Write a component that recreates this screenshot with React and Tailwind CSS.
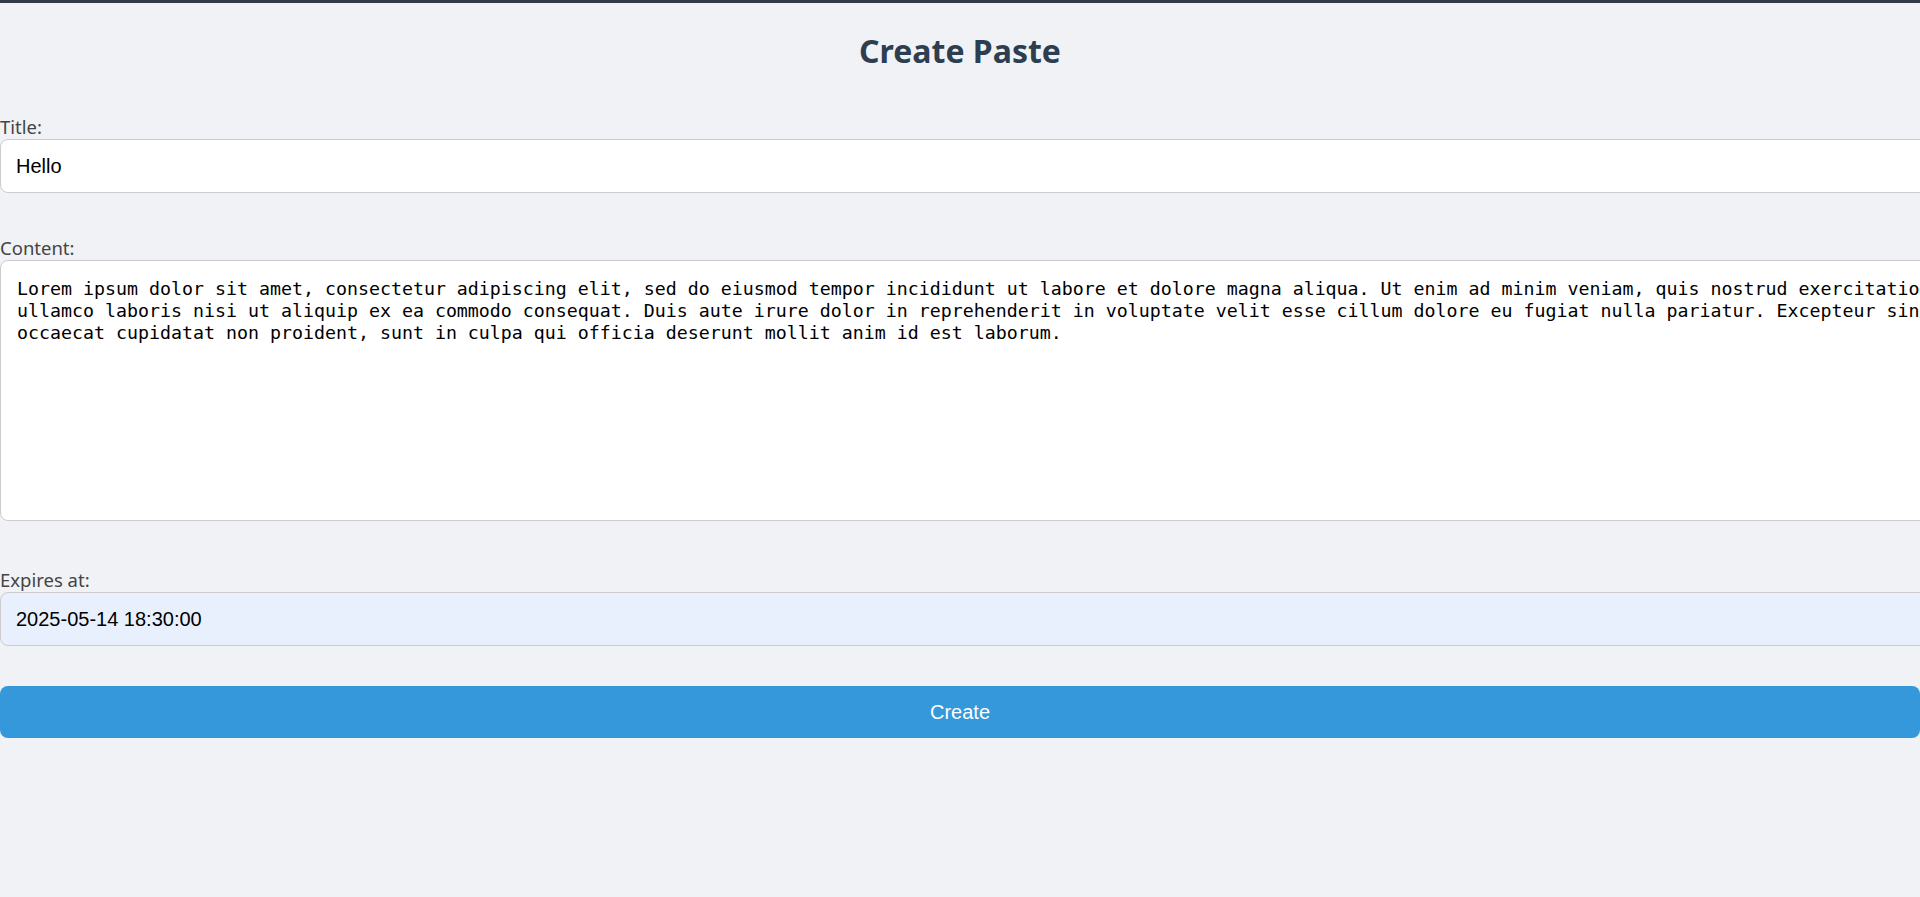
export default function App() {
  return (
    <div className="min-h-screen overflow-x-hidden bg-[#f0f2f5] border-t-[3px] border-[#343b48] font-['Noto_Sans',sans-serif]">
      <h1 className="mt-[28px] text-center text-[32px] leading-[40px] font-bold text-[#2c3e50]">
        Create Paste
      </h1>

      <form className="mt-[44px]" onSubmit={(e) => e.preventDefault()}>
        <div className="mb-[43px]">
          <label className="block h-[24px] text-[18.5px] leading-[24px] text-[#444]">Title:</label>
          <input
            type="text"
            defaultValue="Hello"
            className="block h-[54px] w-[calc(100%+32px)] rounded-[8px] border border-[#ccc] bg-white px-[15px] font-['Liberation_Sans',Arial,sans-serif] text-[20px] text-black outline-none"
          />
        </div>

        <div className="mb-[47px]">
          <label className="block h-[24px] text-[18.5px] leading-[24px] text-[#444]">Content:</label>
          <textarea
            defaultValue="Lorem ipsum dolor sit amet, consectetur adipiscing elit, sed do eiusmod tempor incididunt ut labore et dolore magna aliqua. Ut enim ad minim veniam, quis nostrud exercitation ullamco laboris nisi ut aliquip ex ea commodo consequat. Duis aute irure dolor in reprehenderit in voluptate velit esse cillum dolore eu fugiat nulla pariatur. Excepteur sint occaecat cupidatat non proident, sunt in culpa qui officia deserunt mollit anim id est laborum."
            className="block h-[261px] w-[calc(100%+34px)] resize-none rounded-[8px] border border-[#ccc] bg-white px-[16px] pt-[17px] font-['DejaVu_Sans_Mono',monospace] text-[18.27px] leading-[22px] text-black outline-none"
          />
        </div>

        <div>
          <label className="block h-[24px] text-[18.5px] leading-[24px] text-[#444]">Expires at:</label>
          <input
            type="text"
            defaultValue="2025-05-14 18:30:00"
            className="block h-[54px] w-[calc(100%+32px)] rounded-[8px] border border-[#ccc] bg-[#e8f0fe] px-[15px] font-['Liberation_Sans',Arial,sans-serif] text-[20px] text-black outline-none"
          />
        </div>

        <button
          type="submit"
          className="mt-[40px] block h-[52px] w-full rounded-[8px] bg-[#3498db] font-['Liberation_Sans',Arial,sans-serif] text-[20px] text-white"
        >
          Create
        </button>
      </form>
    </div>
  )
}
